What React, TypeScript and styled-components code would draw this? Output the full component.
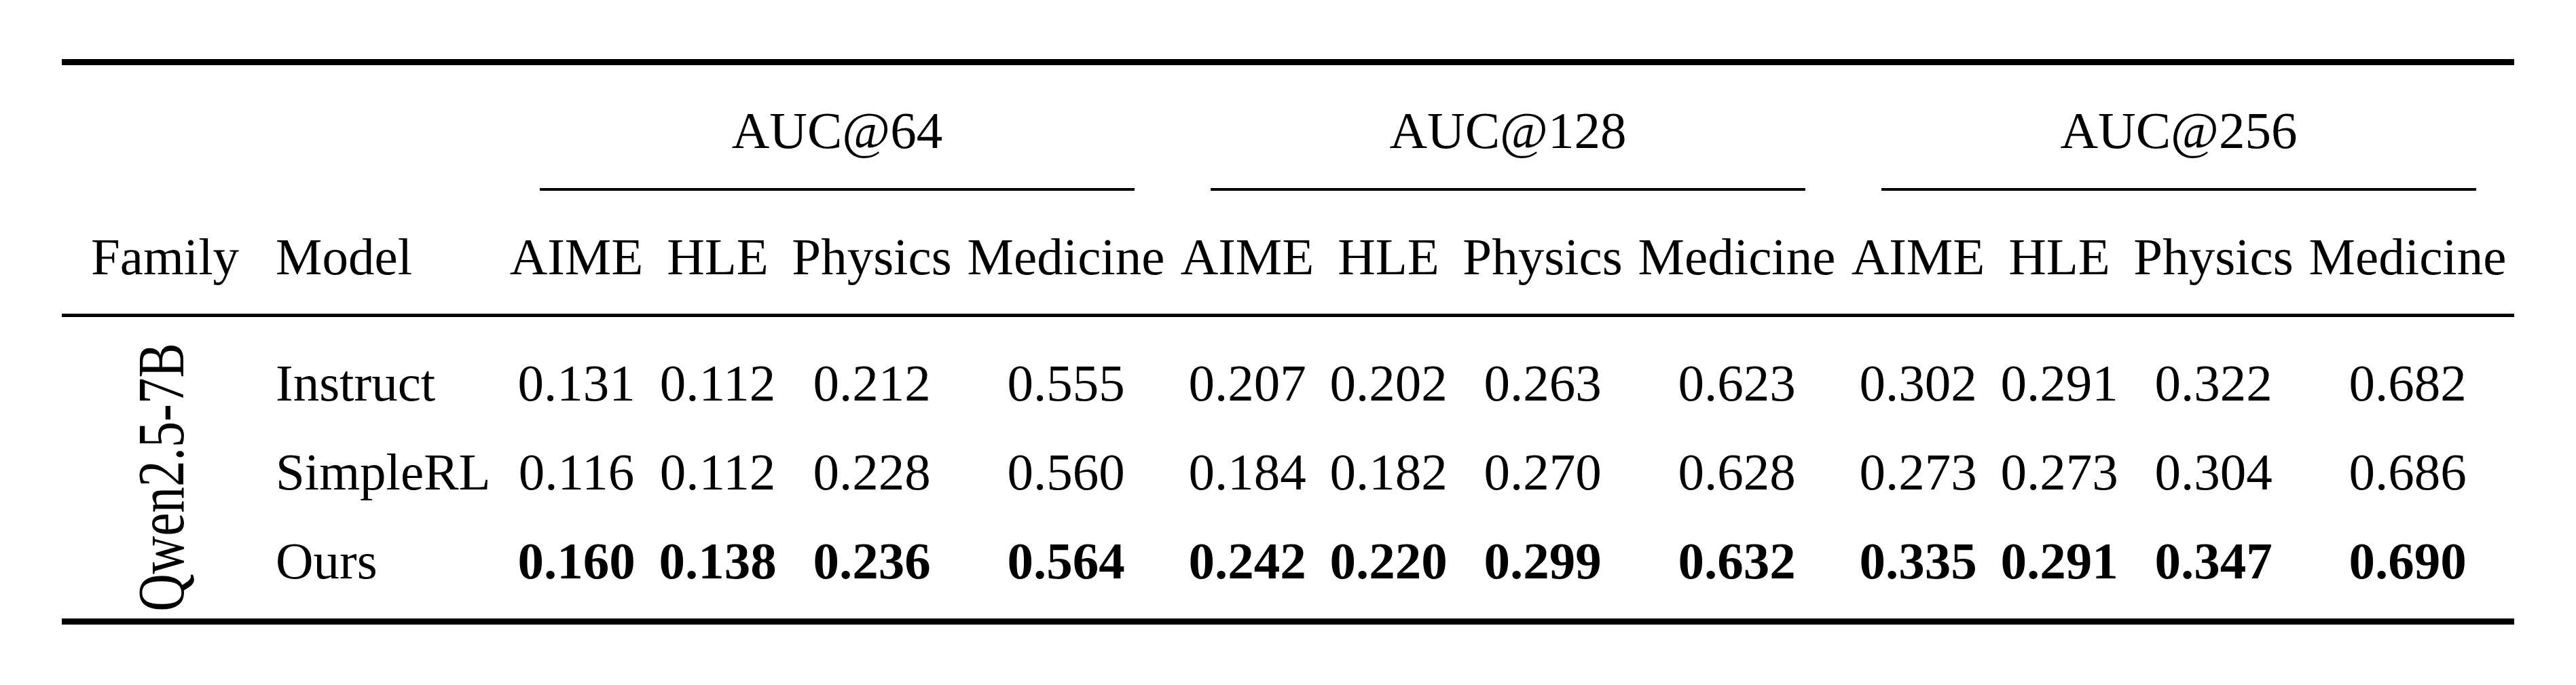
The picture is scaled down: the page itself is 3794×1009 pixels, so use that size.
import React from "react";
import styled, { createGlobalStyle } from "styled-components";

const GlobalStyle = createGlobalStyle`
  html, body {
    margin: 0;
    padding: 0;
    background: #ffffff;
  }
  body {
    font-family: "Liberation Serif", "Times New Roman", serif;
    color: #000000;
  }
`;

const COLS = "304px 344px repeat(3, 220px 196px 258px 314px)";

const Page = styled.div`
  padding: 87px 0 0 91px;
`;

const Table = styled.div`
  width: 3612px;
  font-family: "Liberation Serif", "Times New Roman", serif;
  font-size: 77px;
  color: #000000;
`;

const Rule = styled.div<{ $weight: number }>`
  height: ${(p) => p.$weight}px;
  background: #000000;
`;

const GroupRow = styled.div`
  display: grid;
  grid-template-columns: ${COLS};
`;

const Spacer = styled.div`
  grid-column: span 2;
`;

const Group = styled.div`
  grid-column: span 4;
  display: flex;
  flex-direction: column;
  padding-top: 53px;
`;

const GroupLabel = styled.div`
  line-height: 86px;
  height: 86px;
  text-align: center;
  white-space: nowrap;
`;

const CMidRule = styled.div`
  margin: 42px 56px 0;
  height: 4px;
  background: #000000;
`;

const HeaderRow = styled.div`
  display: grid;
  grid-template-columns: ${COLS};
  padding: 54px 0 41px;
`;

const Cell = styled.div<{ $align?: "left" | "center"; $bold?: boolean }>`
  text-align: ${(p) => p.$align ?? "center"};
  padding-left: ${(p) => (p.$align === "left" ? "11px" : "0")};
  font-weight: ${(p) => (p.$bold ? 700 : 400)};
  white-space: nowrap;
  line-height: 86px;
  height: 86px;
`;

const Body = styled.div`
  display: grid;
  grid-template-columns: ${COLS};
  grid-template-rows: repeat(3, 86px);
  row-gap: 45px;
  padding: 54px 0 42px;
`;

const FamilyCell = styled.div`
  grid-row: 1 / span 3;
  grid-column: 1;
  display: flex;
  align-items: center;
  justify-content: center;
  padding: 16px 12px 0 0;
`;

const RotatedLabel = styled.span`
  display: inline-block;
  flex-shrink: 0;
  white-space: nowrap;
  line-height: 86px;
  transform: rotate(-90deg) scaleY(1.27);
`;

const groups = ["AUC@64", "AUC@128", "AUC@256"];
const metrics = ["AIME", "HLE", "Physics", "Medicine"];

const rows: { model: string; values: string[]; bold?: boolean }[] = [
  {
    model: "Instruct",
    values: [
      "0.131", "0.112", "0.212", "0.555",
      "0.207", "0.202", "0.263", "0.623",
      "0.302", "0.291", "0.322", "0.682",
    ],
  },
  {
    model: "SimpleRL",
    values: [
      "0.116", "0.112", "0.228", "0.560",
      "0.184", "0.182", "0.270", "0.628",
      "0.273", "0.273", "0.304", "0.686",
    ],
  },
  {
    model: "Ours",
    bold: true,
    values: [
      "0.160", "0.138", "0.236", "0.564",
      "0.242", "0.220", "0.299", "0.632",
      "0.335", "0.291", "0.347", "0.690",
    ],
  },
];

export default function App() {
  return (
    <>
      <GlobalStyle />
      <Page>
        <Table>
          <Rule $weight={9} />
          <GroupRow>
            <Spacer />
            {groups.map((g) => (
              <Group key={g}>
                <GroupLabel>{g}</GroupLabel>
                <CMidRule />
              </Group>
            ))}
          </GroupRow>
          <HeaderRow>
            <Cell>Family</Cell>
            <Cell $align="left">Model</Cell>
            {groups.map((g) =>
              metrics.map((m) => <Cell key={g + m}>{m}</Cell>)
            )}
          </HeaderRow>
          <Rule $weight={5} />
          <Body>
            <FamilyCell>
              <RotatedLabel>Qwen2.5-7B</RotatedLabel>
            </FamilyCell>
            {rows.map((r) => (
              <React.Fragment key={r.model}>
                <Cell $align="left">{r.model}</Cell>
                {r.values.map((v, i) => (
                  <Cell key={i} $bold={r.bold}>
                    {v}
                  </Cell>
                ))}
              </React.Fragment>
            ))}
          </Body>
          <Rule $weight={9} />
        </Table>
      </Page>
    </>
  );
}
